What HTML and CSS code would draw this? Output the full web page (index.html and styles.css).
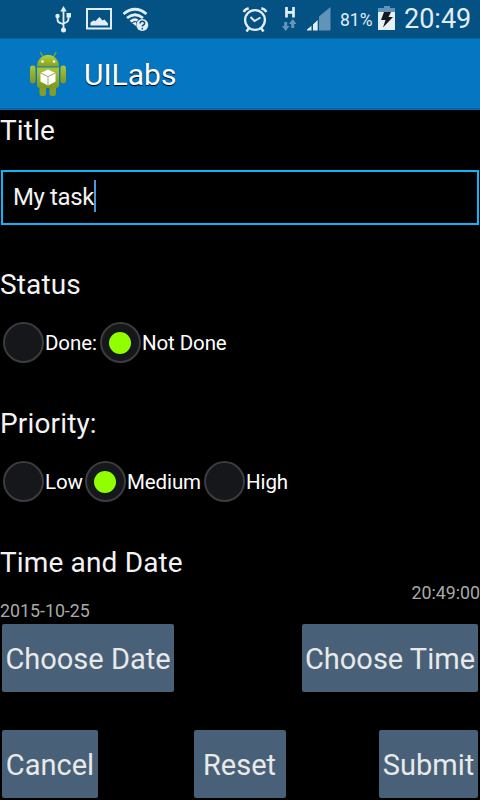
FILE: index.html
```html
<!DOCTYPE html>
<html lang="en">
<head>
<meta charset="utf-8">
<title>UILabs</title>
<link rel="stylesheet" href="styles.css">
</head>
<body>
<header class="statusbar">
  <svg class="st-left" width="110" height="38" viewBox="0 0 110 38" fill="none" stroke="#e3edf6" stroke-width="1.8">
    <path d="M13.5 10v20M7.5 16v3.500q0 3 3 3.500l3 1.500M18.500 15v3.500q0 3-2.500 4l-2.500 1"/>
    <path d="M13.500 6l3.200 5.500h-6.400z" fill="#e3edf6" stroke="none"/>
    <circle cx="13.500" cy="30" r="2.500" fill="#e3edf6" stroke="none"/>
    <circle cx="7.500" cy="16" r="2.200" fill="#e3edf6" stroke="none"/>
    <path d="M16.500 13h4.500v4.500h-4.500z" fill="#e3edf6" stroke="none"/>
    <path d="M37 9h24v19.500H37z" stroke-width="2"/>
    <path d="M40.500 25.500v-3l3-2 2 .5 4-4 3 3.500 2-1 3.500 4v2z" fill="#e3edf6" stroke="none"/>
    <path d="M73.500 14q11.500-9.500 23 0M77 18q8-6.500 16 0M80.500 21.500q4-3 7-1" stroke-width="2.700"/>
    <path d="M82 23l4-1v4z" fill="#e3edf6" stroke="none"/>
    <circle cx="92.300" cy="25" r="6" fill="#e3edf6" stroke="none"/>
    <path d="M90 23.500q0-2.300 2.300-2.300t2.300 2q0 1.200-1.200 1.800t-1.100 1.500M92.300 27.800v1.700" stroke="#045183" stroke-width="1.400"/>
  </svg>
  <svg class="st-right" width="94" height="38" viewBox="0 0 94 38" fill="none" stroke="#e3edf6">
    <circle cx="15" cy="20" r="9.900" stroke-width="2.300"/>
    <path d="M10.500 17l4 4 6-3.500" stroke-width="2"/>
    <path d="M3.700 12q1.500-3 5-3.800M26.300 12q-1.500-3-5-3.800M9 28l-2.500 3.500M21 28l2.500 3.500" stroke-width="2.500"/>
    <path d="M46.500 7v10.500M53.500 7v10.500M46.500 12.300h7" stroke-width="2.700"/>
    <path d="M44.200 22h3v4h2.300l-3.800 5-3.800-5h2.300zM51.200 28h3v-4h2.300l-3.800-5-3.800 5h2.300z" fill="#6496bb" stroke="none"/>
    <path d="M79 16.500L90.500 7v23.500H79z" fill="#6294b8" stroke="none"/>
    <path d="M67 30.500v-1l4.500-3.700v4.700zM73 30.500v-6l4.700-4.500v10.500z" fill="#e3edf6" stroke="none"/>
  </svg>
  <span class="percent">81%</span>
  <svg class="batt" width="18" height="26" viewBox="0 0 18 26">
    <path d="M6 0h6v2h5v4H0V2h6z" fill="#6294b8"/>
    <path d="M0 6h17v18H0z" fill="#e8f0f7"/>
    <path d="M6 6h7l-2.500 5H15L5 21.500 7.500 14H3z" fill="#111a22"/>
  </svg>
  <span class="clock">20:49</span>
</header>
<div class="actionbar">
  <svg class="robot" width="38" height="48" viewBox="0 0 38 48">
    <defs>
      <linearGradient id="g" x1="0" y1="0" x2="0" y2="1"><stop offset="0" stop-color="#b4d33c"/><stop offset="1" stop-color="#86a01e"/></linearGradient>
      <linearGradient id="b" x1="0" y1="0" x2="0" y2="1"><stop offset="0" stop-color="#a9c63a"/><stop offset="1" stop-color="#7d961e"/></linearGradient>
    </defs>
    <path d="M11.500 1.500l3 5M27 1.500l-3 5" stroke="#8da829" stroke-width="1.300" stroke-linecap="round"/>
    <path d="M8 15.500Q8 10 12 6.500Q15 3.800 19 3.800T26 6.500Q30 10 30 15.500z" fill="url(#g)"/>
    <circle cx="13.500" cy="10.500" r="1.300" fill="#fff"/><circle cx="25" cy="10.500" r="1.300" fill="#fff"/>
    <rect x="1" y="14.500" width="5.500" height="18" rx="2.700" fill="url(#b)"/>
    <rect x="31.500" y="14.500" width="5.500" height="18" rx="2.700" fill="url(#b)"/>
    <rect x="10.500" y="32" width="6.500" height="13" rx="2.500" fill="#849e23"/>
    <rect x="20.500" y="32" width="6.500" height="13" rx="2.500" fill="#849e23"/>
    <path d="M8 16.500h22v17.500q0 3-3 3H11q-3 0-3-3z" fill="url(#b)"/>
    <path d="M19 18.500l7.500 3.500v8.500L19 34.500l-7.500-4V22z" fill="#fff"/>
    <path d="M11.500 22l7.500 3.500 7.500-3.500M19 25.500v9" fill="none" stroke="#9caf58" stroke-width="1"/>
  </svg>
  <h1 class="app-title"><span>UILabs</span></h1>
</div>
<main class="form">
  <h2 class="label title-label"><span>Title</span></h2>
  <div class="field"><span>My task</span><i class="caret"></i></div>
  <h2 class="label status-label"><span>Status</span></h2>
  <div class="radios">
    <label class="opt done"><i class="radio"></i><span>Done:</span></label>
    <label class="opt"><i class="radio on"></i><span>Not Done</span></label>
  </div>
  <h2 class="label priority-label"><span>Priority:</span></h2>
  <div class="radios">
    <label class="opt low"><i class="radio"></i><span>Low</span></label>
    <label class="opt medium"><i class="radio on"></i><span>Medium</span></label>
    <label class="opt"><i class="radio"></i><span>High</span></label>
  </div>
  <h2 class="label time-label"><span>Time and Date</span></h2>
  <div class="stamp time">20:49:00</div>
  <div class="stamp">2015-10-25</div>
  <div class="buttons">
    <button class="btn w-date">Choose Date</button>
    <button class="btn w-time">Choose Time</button>
  </div>
  <div class="buttons last">
    <button class="btn w-cancel">Cancel</button>
    <button class="btn w-reset">Reset</button>
    <button class="btn w-submit">Submit</button>
  </div>
</main>
</body>
</html>
```

FILE: styles.css
```css
* { box-sizing: border-box; }
body { margin: 0; width: 480px; height: 800px; overflow: hidden; background: #000; color: #f3f3f3; font-family: Roboto, "Liberation Sans", sans-serif; }
h1, h2 { margin: 0; font-weight: 400; }
svg { display: block; flex: none; }
span { white-space: nowrap; }
.statusbar { display: flex; height: 38px; background: #045183; color: #e3edf6; }
.st-left { margin-left: 50px; }
.st-right { margin-left: 80px; }
.percent { margin-left: 6px; width: 34px; font-size: 17.5px; line-height: 40px; }
.batt { margin: 6px 0 0 4px; }
.clock { margin-left: 8px; font-size: 27px; line-height: 38px; }
.actionbar { display: flex; height: 72px; background: #0576c2; border-top: 1px solid #04659f; border-bottom: 2px solid #0565a7; }
.robot { margin: 12px 0 0 29px; }
.app-title { margin-left: 17px; font-size: 30px; line-height: 72px; color: #fff; text-shadow: 0 1px 1px #000; }
.label { height: 40px; font-size: 28px; line-height: 42px; letter-spacing: .15px; }
.field { display: flex; align-items: center; height: 55px; margin: 20px 1px 39px; padding-left: 10px; border: 2px solid #0eb4fa; font-size: 24px; line-height: 26px; letter-spacing: -.4px; }
.field span { margin-top: -2px; }
.caret { width: 2px; height: 32px; margin-top: -3px; background: #4798dc; }
.radios { display: flex; height: 41px; margin: 18px 0 40px 2.5px; }
.opt { display: flex; height: 41px; font-size: 20.5px; line-height: 42px; letter-spacing: -.1px; color: #fff; }
.radio { display: flex; align-items: center; justify-content: center; flex: none; width: 41px; height: 41px; margin-right: 1.5px; border: 2px solid #3c3c3e; border-radius: 50%; background: #15171a; }
.on::after { content: ""; width: 22px; height: 22px; border-radius: 50%; background: #91ff00; }
.done { width: 97px; }
.low { width: 82px; }
.medium { width: 119px; }
.stamp { height: 18px; font-size: 17.8px; line-height: 18px; color: #a9a9a9; }
.time { margin-top: 2px; text-align: right; }
.buttons { display: flex; justify-content: space-between; padding: 0 2px; margin-top: 4px; }
.last { margin-top: 38px; }
.btn { height: 68px; padding: 2px 0 0; border: 0; border-radius: 2px; background: #486178; color: #e9e9e9; font: 400 29px/66px Roboto, sans-serif; white-space: nowrap; }
.w-date { width: 172px; }
.w-time { width: 176px; }
.w-cancel { width: 96px; }
.w-reset { width: 92px; margin-left: 2px; }
.w-submit { width: 99px; }
```
